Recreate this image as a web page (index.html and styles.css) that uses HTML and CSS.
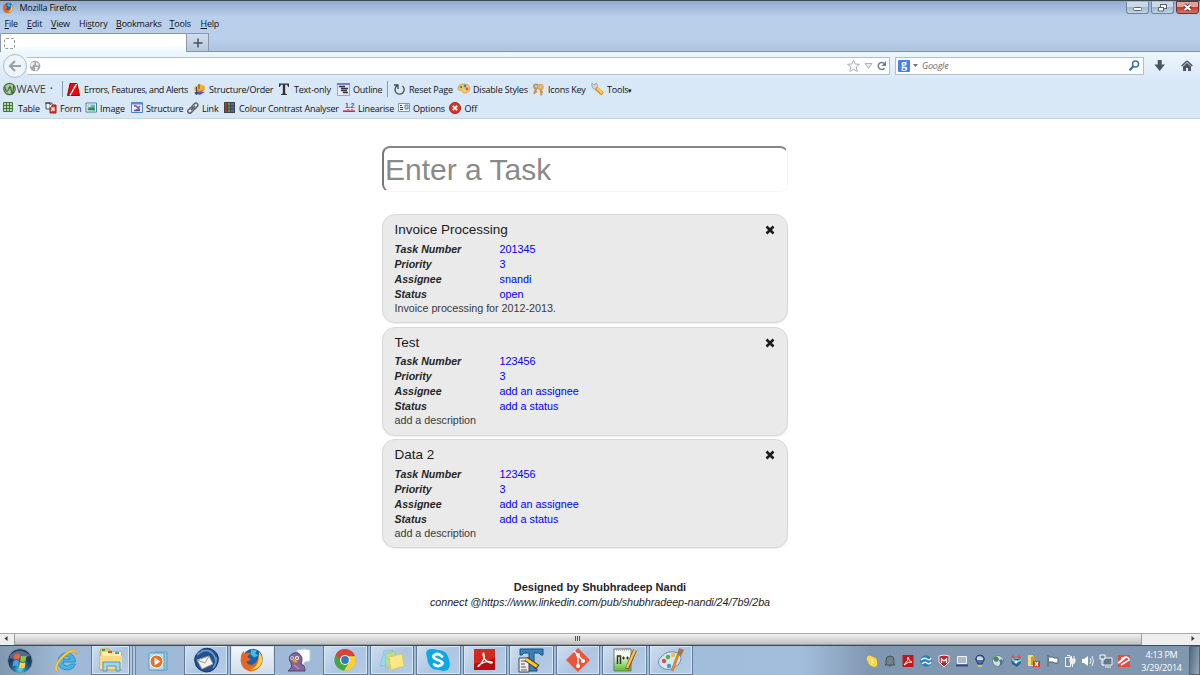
FILE: index.html
```html
<!DOCTYPE html>
<html lang="en">
<head>
<meta charset="utf-8">
<title>Mozilla Firefox</title>
<link rel="stylesheet" href="styles.css">
</head>
<body>
<div class="screen">
<header class="chrome">
  <div class="titlebar">
    <svg class="fx" width="12" height="12" viewBox="0 0 32 32"><use href="#firefox"/></svg>
    <span class="title">Mozilla Firefox</span>
    <div class="winbtns">
      <div class="wb"><svg width="22" height="12"><rect x="6.500" y="5.500" width="8" height="3" rx="1" fill="#fff" stroke="#59646f"/></svg></div>
      <div class="wb"><svg width="22" height="12"><g fill="#fff" stroke="#59646f"><rect x="8.500" y="2.500" width="6" height="4"/><rect x="6.500" y="5.500" width="5" height="3.500"/></g></svg></div>
      <div class="wb close"><svg width="22" height="12"><path d="M7.500 3l6 5M13.500 3l-6 5" stroke="#6b3030" stroke-width="3.600"/><path d="M7.500 3l6 5M13.500 3l-6 5" stroke="#fff" stroke-width="2"/></svg></div>
    </div>
  </div>
  <nav class="menubar"><span><u>F</u>ile</span><span><u>E</u>dit</span><span><u>V</u>iew</span><span>Hi<u>s</u>tory</span><span><u>B</u>ookmarks</span><span><u>T</u>ools</span><span><u>H</u>elp</span></nav>
  <div class="tabs">
    <div class="tab"><i class="blank"></i></div>
    <div class="newtab"><svg width="20" height="18"><path d="M6.500 9h9M11 4.500v9" stroke="#485361" stroke-width="1.500"/></svg></div>
  </div>
  <div class="navbar">
    <div class="back"><svg width="22" height="22"><path d="M6 11h11M11 6l-5 5 5 5" fill="none" stroke="#9aa3ad" stroke-width="2.200"/></svg></div>
    <div class="url">
      <svg width="12" height="12" viewBox="0 0 12 12"><circle cx="6" cy="6" r="5.300" fill="#a4a7aa"/><path d="M2 3l3-1 1 2-2 1-1 2-2-1zM7 2l3 2-1 2-2-1zM6 7l3 0-1 3-2 1z" fill="#edf0f2"/></svg>
      <svg class="right" width="42" height="14" viewBox="0 0 42 14"><path d="M6.500 1l1.700 4 4.300.3-3.300 2.800 1.100 4.400-3.800-2.400-3.800 2.400 1.100-4.400L.5 5.300 4.800 5z" fill="#fafafa" stroke="#adb1b5"/><path d="M18 4.500h7l-3.500 5z" fill="#e7ebee" stroke="#a9b4bf"/><path d="M37 4.300A3.500 3.500 0 1 0 37.600 9" fill="none" stroke="#6d7d8d" stroke-width="1.500"/><path d="M39 2v5h-4.500z" fill="#6d7d8d"/></svg>
    </div>
    <div class="search"><b>g</b><svg width="6" height="4"><path d="M0 0h5l-2.500 3z" fill="#6d7175"/></svg><em>Google</em><svg class="right" width="12" height="12"><circle cx="7.500" cy="4" r="3" fill="none" stroke="#3576b5" stroke-width="1.500"/><path d="M5.300 6.500L1.500 10.300" stroke="#2868aa" stroke-width="2"/></svg></div>
    <svg width="12" height="12"><path d="M3.700 0h4v4.500H11L5.700 11 .4 4.500h3.300z" fill="#4d565f"/></svg>
    <svg class="home" width="12" height="12"><path d="M6 1L.7 6M6 1l5.300 5" stroke="#4d565f" stroke-width="1.700"/><path d="M2 6.500L6 3l4 3.500V11H7V8H5v3H2z" fill="#4d565f"/></svg>
  </div>
  <div class="tools one">
    <span class="item wave"><svg width="13" height="14" viewBox="0 0 13 14"><circle cx="6.500" cy="7" r="5.700" fill="#a9cb96" stroke="#496f45" stroke-width="1.200"/><path d="M2 5q1 6 2.500 4t2-4 2 4 2-5" fill="none" stroke="#3c6239" stroke-width="1.100"/></svg><span>WAVE</span><small>•</small></span>
    <i class="sep"></i>
    <span class="item"><svg width="13" height="13"><path d="M3 .5h7l2.500 12H.5z" fill="#e10d12" stroke="#a80000"/><path d="M9.500 1L3 12.500" stroke="#fff" stroke-width="1.500"/></svg><span class="long">Errors, Features, and Alerts</span></span>
    <span class="item"><svg width="13" height="13"><path d="M1 10l6-2 5 1-5 3z" fill="#4c61cf"/><path d="M1 7l5-2 6 1.500-5 3z" fill="#e05a3e"/><path d="M1 4l6-3 5 2v3L7 8 1 6.500z" fill="#f7ae30"/><path d="M3.500 4v7M2 9l1.500 3L5 9M6 1v5" stroke="#47444c" fill="none"/></svg>Structure/Order</span>
    <span class="item"><svg width="13" height="13"><path d="M0 .5h10v3.500h-.8L8 1.800H6.200V10.500l1.800.8v.7H2v-.7l1.800-.8V1.800H2L.8 4H0z" fill="#333"/></svg><span class="plain">Text-only</span></span>
    <span class="item"><svg width="14" height="13"><path d="M.5 .5h12v12H.5z" fill="#e8e8ff" stroke="#9a9bea"/><path d="M0 1h13" stroke="#7778db" stroke-width="2"/><path d="M2 3.500h6M4 5.500h7M4 7.500h6M6 9.500h5" stroke="#333" stroke-width="1.300"/></svg>Outline</span>
    <i class="sep"></i>
    <span class="item"><svg width="13" height="13"><path d="M4 2.800A4.600 4.600 0 1 0 9.500 3M1 2h4v4" fill="none" stroke="#424b50" stroke-width="1.300"/></svg>Reset Page</span>
    <span class="item"><svg width="14" height="12"><path d="M1 5C1 1 7 0 11 2c4 3 1 9-4 8-2 0-1-3-3-3-2 1-3 0-3-2z" fill="#f5cc6b" stroke="#dda653"/><g><circle cx="4" cy="4" r="1.300" fill="#519842"/><circle cx="8" cy="3" r="1.400" fill="#4982c6"/><circle cx="10" cy="6" r="1.400" fill="#dc5345"/></g></svg>Disable Styles</span>
    <span class="item"><svg width="13" height="13"><circle cx="4" cy="3.500" r="2" fill="none" stroke="#a9997e" stroke-width="2"/><circle cx="8.500" cy="4" r="2" fill="none" stroke="#e6ad5a" stroke-width="2.500"/><path d="M4.500 5L2 11M8.500 6l1 6.500M9 9h2M3 8l2 1" stroke="#c79852" stroke-width="2"/></svg>Icons Key</span>
    <span class="item"><svg width="14" height="14"><path d="M1 1l2 2 2-2c3 2 1 4 0 6C2 8 0 4 1 1z" fill="#d0d4d8" stroke="#8b9198" stroke-width=".7"/><path d="M5 6l6.500 6" stroke="#dd9224" stroke-width="4"/><path d="M6 6l5 5" stroke="#ffd162" stroke-width="2"/></svg><span>Tools<small>▾</small></span></span>
  </div>
  <div class="tools two">
    <span class="item"><svg width="11" height="12"><path d="M.5 .5h9v9h-9zM.5 3.500h9m-9 3h9M3.500 0v10M6.500 0v10" fill="#b8d7a8" stroke="#40773a"/></svg>Table</span>
    <span class="item"><svg width="12" height="12"><path d="M1 1h6v6H1z" fill="#eee" stroke="#545454"/><path d="M5 3h6v8H5z" fill="#d83c31" stroke="#a51f1a"/><path d="M2 3h4l-1 2M6 9l3-3M6 6h3v3" fill="none" stroke="#fff" stroke-width="1.200"/><path d="M0 1h5v2" fill="none" stroke="#333"/></svg>Form</span>
    <span class="item"><svg width="13" height="12"><path d="M1 1h10.500v9H1z" fill="#fff" stroke="#447f9a"/><path d="M2.500 2.500h7.500v6H2.500z" fill="#5bb5ec"/><path d="M2.500 8l2-3 2 1 2-1 1.500 2v1.500z" fill="#478640"/><circle cx="4.500" cy="4" r="1.300" fill="#fff04f"/></svg>Image</span>
    <span class="item"><svg width="12" height="12"><path d="M.5 .5h11v10H.5z" fill="#eee" stroke="#4b83c4"/><path d="M.5 .5h11v2H.5z" fill="#5b8dd0"/><path d="M3 4h2l4 4M9 4L5 8M3 8.500h6" fill="none" stroke="#684baa" stroke-width="1.300"/></svg>Structure</span>
    <span class="item"><svg width="12" height="12"><g transform="rotate(-45 6 6)" fill="none" stroke="#626669" stroke-width="1.500"><rect x="-.5" y="4" width="6.500" height="4" rx="2"/><rect x="5.500" y="4" width="6.500" height="4" rx="2"/><path d="M3 6h6"/></g></svg>Link</span>
    <span class="item"><svg width="12" height="12"><path d="M0 0h11v11H0z" fill="#444"/><path d="M1 1h2v9H1z" fill="#d72d2d"/><path d="M4 1h2v9H4z" fill="#39a652"/><path d="M7 1h3v9H7z" fill="#4268d0"/><path d="M0 4h11M0 7h11" stroke="#444"/></svg>Colour Contrast Analyser</span>
    <span class="item"><svg width="13" height="12"><text x="2" y="6" font-size="7" font-family="Liberation Sans" font-weight="bold" fill="#555798">1.2</text><path d="M1 10V8m2 2V8m2 2V7m2 3V8m2 2V7m2 3V8M0 9.500h12" stroke="#d22d35" stroke-width="1.200"/></svg>Linearise</span>
    <span class="item"><svg width="13" height="12"><path d="M.5 1.500h11v8H.5z" fill="#f5f5f5" stroke="#8c939d"/><path d="M2 3h2v1H2zM2 5h3v1H2zM2 7h3v1H2z" fill="#444"/><path d="M7 3h3v4H7z" fill="#bad7f6" stroke="#4687c9"/></svg>Options</span>
    <span class="item"><svg width="13" height="12"><circle cx="6" cy="6" r="5.500" fill="#dd3826" stroke="#9f211d"/><path d="M3.800 3.800l4.400 4.400m0-4.400l-4.400 4.400" stroke="#fff" stroke-width="1.700"/></svg><span class="plain">Off</span></span>
  </div>
</header>
<main class="page">
  <input class="entry" placeholder="Enter a Task" aria-label="Enter a Task">
  <section class="tasks">
    <article class="task">
      <div class="head"><h2>Invoice Processing</h2><svg width="10" height="10"><use href="#cross"/></svg></div>
      <dl><dt>Task Number</dt><dd>201345</dd><dt>Priority</dt><dd>3</dd><dt>Assignee</dt><dd>snandi</dd><dt>Status</dt><dd>open</dd></dl>
      <p>Invoice processing for 2012-2013.</p>
    </article>
    <article class="task">
      <div class="head"><h2>Test</h2><svg width="10" height="10"><use href="#cross"/></svg></div>
      <dl><dt>Task Number</dt><dd>123456</dd><dt>Priority</dt><dd>3</dd><dt>Assignee</dt><dd>add an assignee</dd><dt>Status</dt><dd>add a status</dd></dl>
      <p>add a description</p>
    </article>
    <article class="task">
      <div class="head"><h2>Data 2</h2><svg width="10" height="10"><use href="#cross"/></svg></div>
      <dl><dt>Task Number</dt><dd>123456</dd><dt>Priority</dt><dd>3</dd><dt>Assignee</dt><dd>add an assignee</dd><dt>Status</dt><dd>add a status</dd></dl>
      <p>add a description</p>
    </article>
  </section>
  <footer class="credit"><strong>Designed by Shubhradeep Nandi</strong><em>connect @https://www.linkedin.com/pub/shubhradeep-nandi/24/7b9/2ba</em></footer>
</main>
<div class="scroll"><svg width="14" height="11"><path d="M7.500 2v5L4.500 4.500z" fill="#333"/></svg><div class="thumb"><i></i></div><svg class="ra" width="14" height="11"><path d="M5.500 2v5l3-2.500z" fill="#333"/></svg></div>
<footer class="taskbar">
  <div class="apps">
    <div class="app"><svg width="28" height="28" viewBox="0 0 30 30"><defs><radialGradient id="orb" cy=".85"><stop stop-color="#54d9ee"/><stop offset=".5" stop-color="#1e6d9c"/><stop offset="1" stop-color="#1d3b60"/></radialGradient></defs><circle cx="15" cy="15" r="13.300" fill="url(#orb)" stroke="#8b9fb1"/><path d="M4 9q10-10 22 0-10 5-22 3z" fill="#fff" opacity=".25"/><path d="M9 8q3-2 6 0l-1 6q-3-2-6 0z" fill="#ed6230"/><path d="M16 9q3 2 6 0l-1 6q-3 2-6 0z" fill="#91c23c"/><path d="M8 15q3-2 6 0l-1 6q-3-2-6 0z" fill="#4d9cdf"/><path d="M15 16q3 2 6 0l-1 6q-3 2-6 0z" fill="#ffd044"/></svg></div>
    <div class="app"><svg width="26" height="26" viewBox="0 0 26 26"><path d="M5 13a8.500 8.500 0 0 1 17.500 1H10q0 4 4 4 2.500 0 3.500-2h5q-2 6-9 6-8.500-1-8.500-9zM10 11h7q-.5-3-3.500-3T10 11z" fill="#45b5e8" fill-rule="evenodd" stroke="#2484bd" stroke-width=".8"/><path d="M5 23C1 25 0 18 7 10 15 1 24-1 24 6c-1-4-7-3-14 4-6 6-7 11-5 13z" fill="#ffd02e" stroke="#db9d1e" stroke-width=".6"/></svg></div>
    <div class="app open stack"><svg width="26" height="26" viewBox="0 0 26 26"><path d="M2 5l1-3h8l2 3h10v18H2z" fill="#efcd70" stroke="#c8a54d"/><path d="M4 5h19v17H4z" fill="#fff1a8"/><path d="M4 2h3v2H4z" fill="#3ca647"/><path d="M10 4h4v2h-4z" fill="#de4232"/><path d="M17 5h4v2h-4z" fill="#3f9ade"/><path d="M2 9h22v13H2z" fill="#f8dc83"/><path d="M5 24v-9h17v9h-4v-5H9v5z" fill="#9bd8ed" stroke="#5797bb"/></svg></div>
    <div class="app"><svg width="24" height="24" viewBox="0 0 24 24"><path d="M8 3h12v18H8z" fill="#8dc6e5" stroke="#5c9fc8"/><path d="M2 4h15v17H2z" fill="#b8dded" stroke="#5b9fbd"/><circle cx="9.500" cy="12.500" r="6.500" fill="#ef6b1d" stroke="#fff"/><path d="M7.500 8.500v8l6-4z" fill="#fff"/></svg></div>
    <div class="app open"><svg width="26" height="26" viewBox="0 0 26 26"><path d="M3 8Q9-1 18 2q9 4 7 13-3 10-12 10Q3 23 2 15q-1-4 1-7z" fill="#264f8d" stroke="#173466"/><path d="M4 8q8-7 15-3M8 4q13-3 15 11M20 21q4-5 3-11" fill="none" stroke="#5d9bd3" stroke-width="1.600"/><path d="M4 13l12-4 4 8-11 5z" fill="#f4f4ef" stroke="#9a9c9f"/><path d="M4 13l8 3 4-7" fill="none" stroke="#999"/></svg></div>
    <div class="app open active"><svg width="26" height="26" viewBox="0 0 32 32"><g id="firefox"><circle cx="17" cy="14" r="12" fill="#1f62a7"/><path d="M15 3l7 1-2 4 4 2-5 3-5-4z" fill="#49b9e4"/><path d="M25 6q6 7 3 15-5 9-14 9Q3 28 2 17 2 8 6 5l1 4q4-3 7-1l-4 4q1 2 4 2l-1 3-4 1q2 4 7 4 8-2 9-16z" fill="#e76620"/><path d="M25 6q7 10 0 18-4 4-11 4 9-4 10-12z" fill="#ffd348"/></g></svg></div>
    <div class="app"><svg width="26" height="26" viewBox="0 0 26 26"><path d="M11 2q7-2 13 0v11l-5 1-3 4v-4l-5-1z" fill="#fff" stroke="#bdcbd5"/><path d="M2 23q5-3 3-8-4-6 1-9 7-4 10 4 0 4-1 6 4 1 4 7z" fill="#876598" stroke="#594268"/><circle cx="6" cy="10" r="1.700" fill="#fff"/><circle cx="11" cy="10" r="2" fill="#fff"/><circle cx="6" cy="10" r=".8"/><circle cx="11" cy="10" r=".8"/><path d="M6 12l3-1 3 3-3 1z" fill="#ed9d2b"/><path d="M8 17l5 4" stroke="#b298c0" stroke-width="1.500"/></svg></div>
    <div class="app open"><svg width="24" height="24" viewBox="0 0 26 26"><circle cx="13" cy="13" r="11.500" fill="#45a646"/><path d="M3 7A11.500 11.500 0 0 1 24 9H13q-4 0-5 5z" fill="#dc4037"/><path d="M24 9a11.500 11.500 0 0 1-12 15.500l6-10q1-3-2-5.500z" fill="#ffcf36"/><circle cx="13" cy="13" r="5.500" fill="#f5f5f5"/><circle cx="13" cy="13" r="4.200" fill="#317dbc"/></svg></div>
    <div class="app open"><svg width="26" height="26" viewBox="0 0 26 26"><path d="M5 4l9-1-3 15-10 1z" fill="#9bd5ee" stroke="#77b4d2" stroke-width=".5"/><path d="M6 7l10-3 2 14-11 3z" fill="#b5dd91" stroke="#94bc75" stroke-width=".5"/><path d="M10 10l13-3 2 12-13 4z" fill="#ffe883" stroke="#dcc869"/></svg></div>
    <div class="app open"><svg width="26" height="26" viewBox="0 0 26 26"><path d="M2 10q-3-8 5-8 3 0 5 1 10-1 12 10 3 11-6 11l-4-1Q3 23 2 10z" fill="#08a9e4"/><path d="M17 9.500Q13 5.500 9.500 8T13 13t3 5-7-.7" fill="none" stroke="#fff" stroke-width="2.800" stroke-linecap="round"/></svg></div>
    <div class="app open"><svg width="24" height="24" viewBox="0 0 24 24"><path d="M1 1h21v21H1z" fill="#b90d0c"/><path d="M1 1h21v9L1 16z" fill="#d12a20"/><path d="M6 18q7-8 5-12-1-2-1 1 2 7 8 8 2 0 1-1-5-2-13 3-2 2 0 1z" fill="none" stroke="#fff" stroke-width="1.300"/></svg></div>
    <div class="app open"><svg width="26" height="26" viewBox="0 0 26 26"><path d="M2 2h23v6h-2l-2-2h-5v15l3 1v2H9v-2l2-1V6H6L4 8H2z" fill="#3582b9" stroke="#1c4d76"/><path d="M1 11h10v14H1z" fill="#eee" stroke="#444"/><path d="M3 14h5M3 17h4M3 20h5M3 23h6" stroke="#555"/><path d="M8 12l12 8" stroke="#473d25" stroke-width="5"/><path d="M8 12l11 7.500" stroke="#ffc730" stroke-width="3"/></svg></div>
    <div class="app open"><svg width="26" height="26" viewBox="0 0 26 26"><path d="M13 1l12 12-12 12L1 13z" fill="#ee5438"/><path d="M9 4l4 4v12m0-12l5 6" fill="none" stroke="#fff" stroke-width="1.500"/><g fill="#fff"><circle cx="13" cy="8" r="2"/><circle cx="13" cy="19" r="2"/><circle cx="18" cy="14" r="2"/></g></svg></div>
    <div class="app open"><svg width="26" height="26" viewBox="0 0 26 26"><defs><linearGradient id="page" x2="0" y2="1"><stop offset=".3" stop-color="#f5faee"/><stop offset="1" stop-color="#51bd1e"/></linearGradient></defs><path d="M3 2h17v22H3z" fill="url(#page)" stroke="#777"/><path d="M5 3h13" stroke="#888" stroke-dasharray="1 1"/><path d="M6.500 17V9h3v8" fill="none" stroke="#333" stroke-width="1.500"/><path d="M11 11h3m-1.500-1.500v3M15 11h3m-1.500-1.500v3" stroke="#333"/><path d="M16 22L24 3" stroke="#7d4b22" stroke-width="4"/><path d="M16 21L24 3" stroke="#f8c448" stroke-width="2.400"/></svg></div>
    <div class="app open"><svg width="26" height="26" viewBox="0 0 26 26"><path d="M3 10q7-8 17-4 6 5 0 12-9 8-17 2-5-5 0-10z" fill="#d7e7ef" stroke="#688fa8"/><circle cx="6" cy="14" r="2.200" fill="#db5243"/><circle cx="10" cy="10" r="2.200" fill="#54ad44"/><circle cx="15" cy="8" r="2.200" fill="#edc23e"/><circle cx="11" cy="19" r="2.200" fill="#4c97d3"/><path d="M14 24L20 8" stroke="#da8437" stroke-width="3"/><path d="M19 8l2-7 5 2-3 6z" fill="#a5754c"/></svg></div>
  </div>
  <div class="tray">
    <svg viewBox="0 0 14 14"><path d="M2 3q2-3 6 0 5 1 4 6 1 4-3 4-5-1-6-5-2-2-1-5z" fill="#ffd63d"/><path d="M7 5v3l2 1" fill="none" stroke="#fff"/></svg>
    <svg viewBox="0 0 14 14"><path d="M3 10V6a4 4 0 0 1 8 0v4l1 1H2zM6 12h2" fill="#75808a" stroke="#475563"/></svg>
    <svg viewBox="0 0 14 14"><path d="M1.500 1h11v12h-11z" fill="#c91516"/><path d="M3 11q5-5 4-8 1 5 4 5Q8 7 3 11z" fill="none" stroke="#fff"/></svg>
    <svg viewBox="0 0 14 14"><circle cx="7" cy="7" r="5.800" fill="#2b7fba"/><path d="M2 6q3-3 6-1t4-1M3 10q3-3 5-1t4-1" fill="none" stroke="#e5f2fa" stroke-width="1.500"/></svg>
    <svg viewBox="0 0 14 14"><path d="M2 2l5-1 5 1v6l-5 5-5-5z" fill="#b62a2f" stroke="#eee"/><path d="M4.500 9V5L7 7l2.500-2v4" fill="none" stroke="#fff" stroke-width="1.300"/></svg>
    <svg viewBox="0 0 14 14"><path d="M2.500 2.500h9v7h-9z" fill="#adb9c1" stroke="#eef2f4"/><path d="M1 11.500h12" stroke="#394680" stroke-width="2"/></svg>
    <svg viewBox="0 0 14 14"><path d="M4 8Q1 5 4 2q3-2 6 0 3 3 0 6l-1 2H5z" fill="#516fa4" stroke="#273d65"/><path d="M4 3q3-2 6 1v2H4z" fill="#cbd9e7"/><path d="M5 11h4v2H5z" fill="#d5c466"/></svg>
    <svg viewBox="0 0 14 14"><circle cx="7" cy="7" r="5.500" fill="#d5e0e3" stroke="#698493"/><path d="M2 4q5-4 6 2l-2 2q-3 0-4-4z" fill="#438a57"/><path d="M8 6q4-2 4 2-1 4-4 4 2-3 0-6z" fill="#4f7696"/></svg>
    <svg viewBox="0 0 14 14"><path d="M2 5h10v4l-4 4-5-3z" fill="#26688f"/><path d="M4 1l2 2-2 2-2-2zM10 1l2 2-2 2-2-2z" fill="#ef4848"/><path d="M3 5l4 3 5-2" stroke="#70d5e4" stroke-width="2" fill="none"/><circle cx="7" cy="8" r="1.500" fill="#fff"/></svg>
    <svg viewBox="0 0 14 14"><path d="M1 1h5v11H1z" fill="#f6dc83"/><path d="M4 3l4-1v9H4z" fill="#c49b43"/><path d="M6 7h7v6H6z" fill="#d63227"/><path d="M8 8l3 4m0-4l-3 4" stroke="#fff" stroke-width="1.300"/></svg>
    <svg viewBox="0 0 14 14"><path d="M3 1v12M4 3h4l1 1h4v5H9L8 8H4" fill="#fff" stroke="#525f6b"/></svg>
    <svg viewBox="0 0 14 14"><path d="M2.500 3.500h5v9h-5zM4 1.500h3v2" fill="#8190a0" stroke="#f4f5f6"/><path d="M7 5h5v3l-1.500 2h-2L7 8zM8.500 5V2m2.500 3V2M9.500 10v3" fill="#e8ecef" stroke="#f4f5f6"/></svg>
    <svg viewBox="0 0 14 14"><path d="M1 5h2l4-3v10L3 9H1z" fill="#fff"/><path d="M9 4q2 3 0 6m2-8q3 5 0 10" fill="none" stroke="#eef1f4"/></svg>
    <svg viewBox="0 0 14 14"><path d="M4 4h9v7H4zM6 13h6" fill="#63778b" stroke="#edf0f2"/><path d="M1 1h5v4H1zM3 5v6h2" fill="#71869a" stroke="#fff"/></svg>
    <svg viewBox="0 0 14 14"><path d="M1 1h12v12H1z" fill="#e44c40"/><path d="M1 9l7-6q4 0 4 3l-8 5M4 4h4L2 9" fill="none" stroke="#fff" stroke-width="1.500"/></svg>
  </div>
  <div class="clock"><span>4:13 PM</span><span>3/29/2014</span></div>
  <div class="desk"></div>
</footer>
</div>
<svg class="defs" width="0" height="0"><g id="cross"><path d="M1.500 1.500l7 7m0-7l-7 7" stroke="#1b1b1b" stroke-width="2.600"/></g></svg>
</body>
</html>
```
FILE: styles.css
```css
* { box-sizing: border-box; }
body { margin: 0; font-family: "Liberation Sans", Arial, sans-serif; color: #252525; }
svg { display: block; flex: none; }
.defs { position: absolute; }
.screen { width: 1200px; height: 675px; display: flex; flex-direction: column; overflow: hidden; background: #fff; }

/* Browser chrome */
.chrome { height: 119px; flex: none; font: 9px "Open Sans", "Noto Sans", sans-serif; letter-spacing: -.2px; color: #111; background: #d9e8f7; border-bottom: 1px solid #c5d6e5; }
.titlebar { height: 16px; border-top: 1px solid #45494e; background: linear-gradient(#91add0, #b8cde6); display: flex; padding-left: 2px; }
.title { margin-left: 5.500px; line-height: 14px; letter-spacing: -.25px; }
.fx { margin-top: 1px; }
.winbtns { display: flex; gap: 2px; margin-left: auto; padding-right: 1px; }
.wb { width: 23px; height: 13px; border: 1px solid #71869f; border-top-color: #a9bbcf; border-radius: 0 0 3px 3px; background: linear-gradient(#c9d9e9 45%, #a3b8ce 50%, #c1d4e8); }
.close { border-color: #6b3038; background: linear-gradient(#e2a29b 45%, #bd3c2e 50%, #d9755e); }
.menubar { height: 17px; background: #b9cfea; padding-left: 4.500px; display: grid; grid-template-columns: 22.500px 24px 28px 37px 53.500px 31px 30px; line-height: 16px; }
.menubar span { white-space: nowrap; }
.menubar u { text-underline-offset: 1px; }
.tabs { height: 19px; display: flex; background: linear-gradient(#b9cfea 30%, #adc3df); border-bottom: 1px solid #8095ac; }
.tab { width: 187px; height: 19px; border: 1px solid #8998aa; border-bottom: 0; border-radius: 2px 2px 0 0; background: linear-gradient(#fff 60%, #eff7fd); padding: 4px 3px; }
.blank { display: block; width: 11px; height: 11px; border: 1px dashed #999; border-radius: 2px; }
.newtab { width: 22px; border: 1px solid #8998aa; border-left: 0; border-bottom: 0; background: linear-gradient(#d1deec, #b7c8dc); }
.navbar { height: 27px; background: linear-gradient(#eef6fd, #dae9f8); display: flex; align-items: center; padding-left: 3px; }
.back { width: 24px; height: 24px; border: 1px solid #aebdcb; border-radius: 50%; background: #edf4fb; }
.url { width: 863px; height: 18px; background: #fff; border: 1px solid #afc0d0; border-left: 0; display: flex; align-items: center; padding: 0 0 0 2px; }
.right { margin-left: auto; }
.search { width: 249px; height: 18px; margin: 0 10px 0 5px; background: #fff; border: 1px solid #afc0d0; display: flex; align-items: center; gap: 3px; padding: 0 3px 0 2px; color: #707070; }
.search b { width: 12px; height: 12px; background: #447fec; color: #fff; font: bold 12px/9px "Liberation Serif", serif; text-align: center; border-radius: 1px; }
.search em { margin-left: 0; }
.home { margin-left: 15px; }
.tools { display: grid; align-items: center; padding-left: 3px; height: 20px; }
.one { grid-template-columns: 59px 5px 126px 86px 58px 50px 6px 64px 75px 59px 45px; height: 20px; }
.two { grid-template-columns: 42px 40px 46px 56px 37px 119px 55px 51px 40px; height: 19px; padding-bottom: 1px; }
.item { display: flex; align-items: center; gap: 2px; white-space: nowrap; }
.one .item > svg { width: 14px; }
.two .item > svg { width: 13px; }
.item small { font-size: 7px; }
.wave { font-size: 11px; letter-spacing: -.1px; color: #444; gap: 1px; line-height: 14px; }
.wave span { margin-top: -1px; }
.one .wave > svg { width: 13px; margin-left: -.5px; }
.wave small { margin-left: 3px; }
.long { margin-left: 1px; letter-spacing: -.36px; }
.plain { margin-left: -1px; }
.two .plain { margin-left: .5px; }
.sep { width: 1px; height: 16px; background: #8e9bab; }

/* Task list */
.page { flex: 1; padding: 27px 0 0 382px; }
.entry { display: block; width: 406px; height: 46px; border-style: solid; border-width: 2px 1px 1px 2px; border-color: #858585 #f5f5f5 #f5f5f5 #777; border-radius: 8px; padding: 0 0 0 1px; font: 30px "Liberation Sans", Arial, sans-serif; background: #fff; }
.entry::placeholder { color: #8a8a8a; opacity: 1; }
.tasks { display: flex; flex-direction: column; gap: 3.500px; margin-top: 22px; }
.task { width: 406px; height: 109px; border: 1px solid #d9d9d9; border-radius: 13px; background: #eaeaea; padding: 6px 12px 0 11.500px; box-shadow: 0 1px 1px #eee; font-size: 10.800px; }
.head { display: flex; justify-content: space-between; height: 20.500px; }
.head svg { margin-top: 4px; }
.head h2 { margin: 0; font-size: 13.500px; font-weight: normal; line-height: 18px; color: #1b1b1b; }
.task dl { margin: 0; display: grid; grid-template-columns: 105px 1fr; grid-auto-rows: 15px; line-height: 15px; }
.task dt { font-weight: bold; font-style: italic; font-size: 10.600px; }
.task dd { margin: 0; color: #0000fa; }
.task p { margin: 0; line-height: 13px; color: #3a3a3a; letter-spacing: -.04px; }
.credit { width: 436px; margin-top: 32px; display: flex; flex-direction: column; align-items: center; font-size: 10.800px; line-height: 15px; }
.credit strong { font-size: 11px; }
.credit em { letter-spacing: -.06px; }

/* Horizontal scrollbar */
.scroll { height: 12px; flex: none; background: #eee; border-top: 1px solid #aaa; display: flex; }
.thumb { width: 1128px; height: 11px; border: 1px solid #9d9d9d; border-top: 0; background: linear-gradient(#f2f2f2, #dadada 50%, #c1c1c1); display: flex; justify-content: center; align-items: flex-start; padding-top: 2px; }
.thumb i { width: 6px; height: 5px; background: repeating-linear-gradient(90deg, #555 0 1px, #ddd 1px 2px); }
.ra { margin-left: auto; }

/* Taskbar */
.taskbar { height: 30px; flex: none; border-top: 1px solid #344b60; display: flex; background: linear-gradient(90deg, #8298b1 0, #9eb8d5 60px, #a3bedc 800px, #8097b1 870px, #8097b1); }
.apps { width: 862px; margin-left: -2.500px; display: grid; grid-template-columns: repeat(15, 46.500px); }
.app { display: flex; align-items: center; justify-content: center; margin-right: 2px; }
.open { border: 1px solid #607b98; border-top: 0; background: linear-gradient(135deg, #d1dff0, #adc5e1 55%, #b7cde6); box-shadow: inset 0 0 0 1px #d7e4f1; }
.active { background: linear-gradient(#f3f7fb, #ceddeb); }
.stack { width: 39px; margin-left: .5px; box-shadow: inset 0 0 0 1px #d7e4f1, 2px 0 #afc6df, 3px 0 #6e89a7, 5px 0 #afc6df, 6px 0 #6e89a7; }
.tray { width: 272px; margin-left: 4px; display: grid; grid-template-columns: repeat(15, 18px); align-items: center; padding-left: 1.500px; }
.tray svg { width: 14px; height: 14px; }
.clock { width: 52px; display: flex; flex-direction: column; align-items: center; justify-content: center; color: #fff; font: 9px/13px "Open Sans", "Noto Sans", sans-serif; letter-spacing: -.25px; }
.desk { margin-left: auto; width: 11px; border: 1px solid #53687e; background: linear-gradient(100deg, #50677e, #9aaabc); }
```
